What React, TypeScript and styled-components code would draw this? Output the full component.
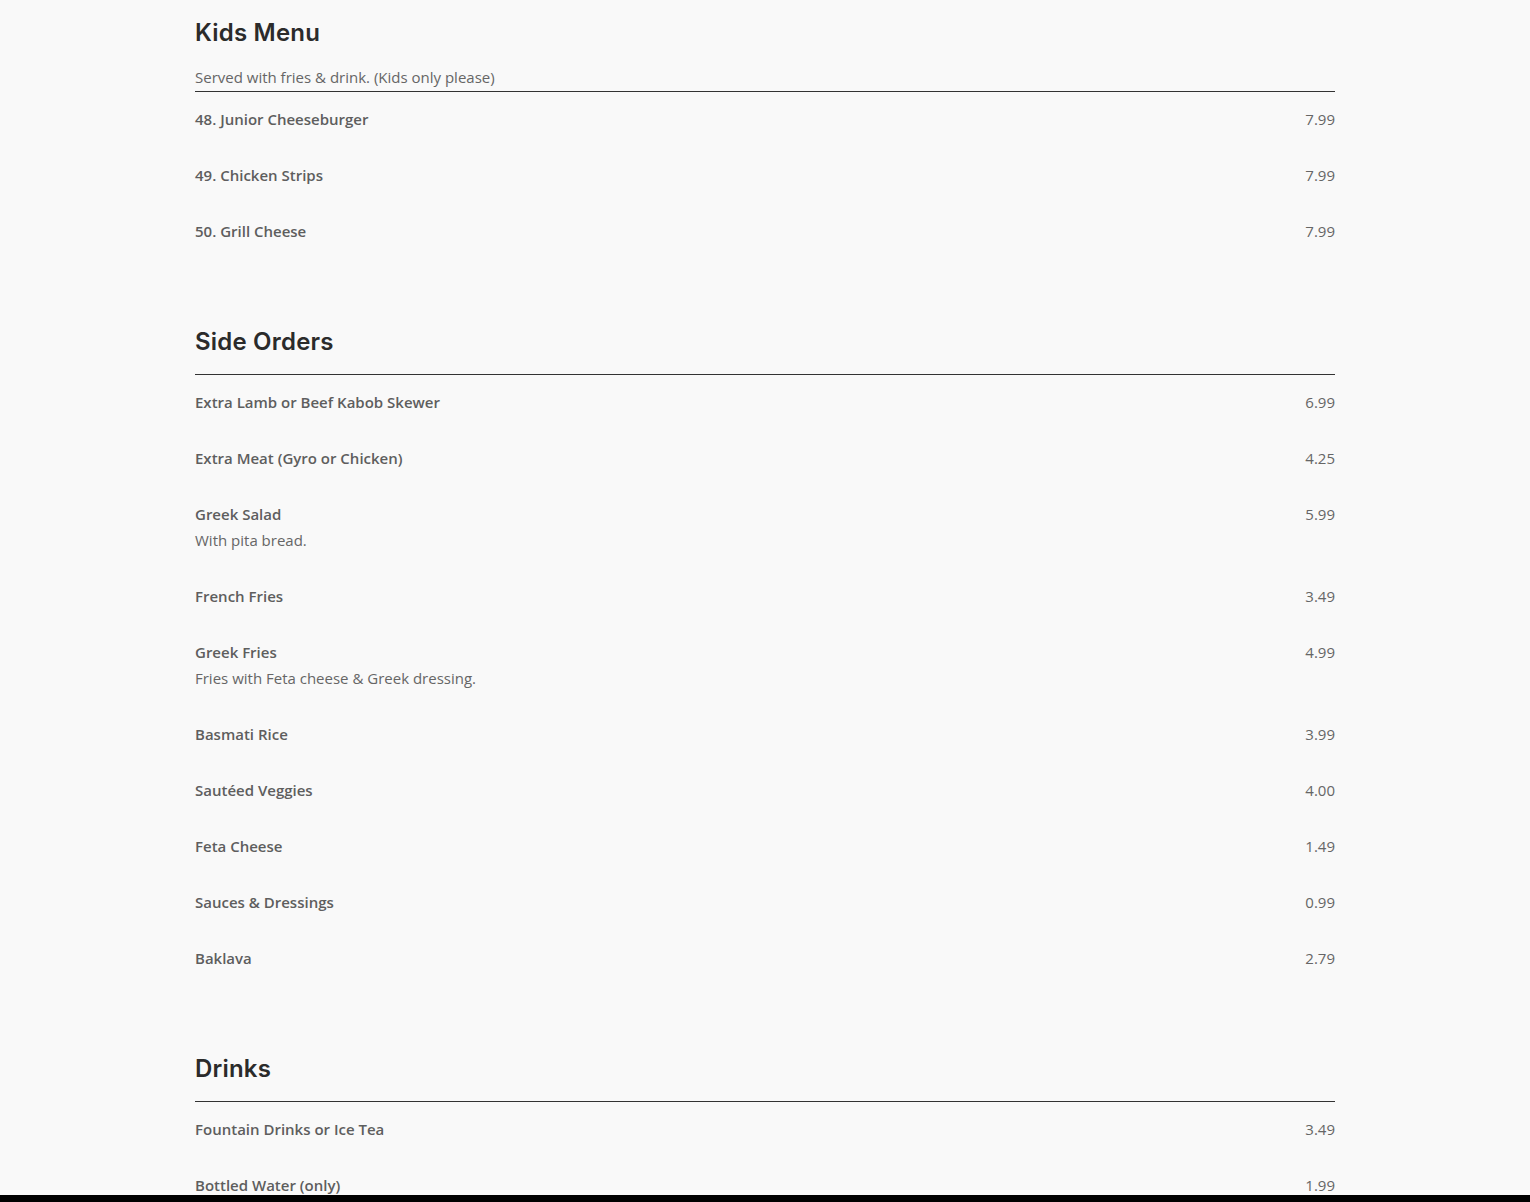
import React from "react";
import styled, { createGlobalStyle } from "styled-components";

type MenuItem = {
  name: string;
  price: string;
  description?: string;
};

type MenuSection = {
  title: string;
  description?: string;
  items: MenuItem[];
};

const sections: MenuSection[] = [
  {
    title: "Kids Menu",
    description: "Served with fries & drink. (Kids only please)",
    items: [
      { name: "48. Junior Cheeseburger", price: "7.99" },
      { name: "49. Chicken Strips", price: "7.99" },
      { name: "50. Grill Cheese", price: "7.99" },
    ],
  },
  {
    title: "Side Orders",
    items: [
      { name: "Extra Lamb or Beef Kabob Skewer", price: "6.99" },
      { name: "Extra Meat (Gyro or Chicken)", price: "4.25" },
      { name: "Greek Salad", price: "5.99", description: "With pita bread." },
      { name: "French Fries", price: "3.49" },
      { name: "Greek Fries", price: "4.99", description: "Fries with Feta cheese & Greek dressing." },
      { name: "Basmati Rice", price: "3.99" },
      { name: "Sautéed Veggies", price: "4.00" },
      { name: "Feta Cheese", price: "1.49" },
      { name: "Sauces & Dressings", price: "0.99" },
      { name: "Baklava", price: "2.79" },
    ],
  },
  {
    title: "Drinks",
    items: [
      { name: "Fountain Drinks or Ice Tea", price: "3.49" },
      { name: "Bottled Water (only)", price: "1.99" },
    ],
  },
];

const App: React.FC = () => {
  return (
    <>
      <GlobalStyle />
      <Page>
        <Menu>
          {sections.map((section) => (
            <Section key={section.title}>
              <SectionHeader>
                <SectionTitle>{section.title}</SectionTitle>
                {section.description && <SectionNote>{section.description}</SectionNote>}
              </SectionHeader>
              <ItemList>
                {section.items.map((item) => (
                  <Item key={item.name}>
                    <ItemText>
                      <ItemName>{item.name}</ItemName>
                      {item.description && <ItemNote>{item.description}</ItemNote>}
                    </ItemText>
                    <Price>{item.price}</Price>
                  </Item>
                ))}
              </ItemList>
            </Section>
          ))}
        </Menu>
      </Page>
      <BottomBar />
    </>
  );
};

export default App;

const GlobalStyle = createGlobalStyle`
  html, body {
    margin: 0;
    padding: 0;
    background: #f9f9f9;
  }
  body {
    font-family: "Open Sans", "Liberation Sans", sans-serif;
    color: #666;
  }
`;

const Page = styled.div`
  padding-top: 18px;
  min-height: 1202px;
  box-sizing: border-box;
`;

const Menu = styled.div`
  width: 1140px;
  margin: 0 auto;
  display: flex;
  flex-direction: column;
  gap: 67px;
`;

const Section = styled.section`
  display: flex;
  flex-direction: column;
`;

const SectionHeader = styled.div`
  padding-bottom: 1px;
  border-bottom: 1px solid #333;
`;

const SectionTitle = styled.h2`
  margin: 0 0 17px;
  font-family: "Inter", "Noto Sans", sans-serif;
  font-size: 24px;
  font-weight: 600;
  line-height: 29px;
  letter-spacing: 0.2px;
  color: #2b2b2b;
`;

const SectionNote = styled.p`
  margin: 0;
  font-size: 15px;
  line-height: 26px;
  color: #666;
`;

const ItemList = styled.div`
  display: flex;
  flex-direction: column;
`;

const Item = styled.div`
  display: flex;
  justify-content: space-between;
  align-items: flex-start;
  padding: 14px 0 16px;
`;

const ItemText = styled.div`
  display: flex;
  flex-direction: column;
`;

const ItemName = styled.span`
  font-size: 15px;
  font-weight: 600;
  line-height: 26px;
  color: #5e5e5e;
`;

const ItemNote = styled.span`
  font-size: 15px;
  line-height: 26px;
  color: #666;
`;

const Price = styled.span`
  font-size: 15px;
  line-height: 26px;
  color: #666;
`;

const BottomBar = styled.div`
  position: fixed;
  left: 0;
  right: 0;
  bottom: 0;
  height: 7px;
  background: #000;
`;
